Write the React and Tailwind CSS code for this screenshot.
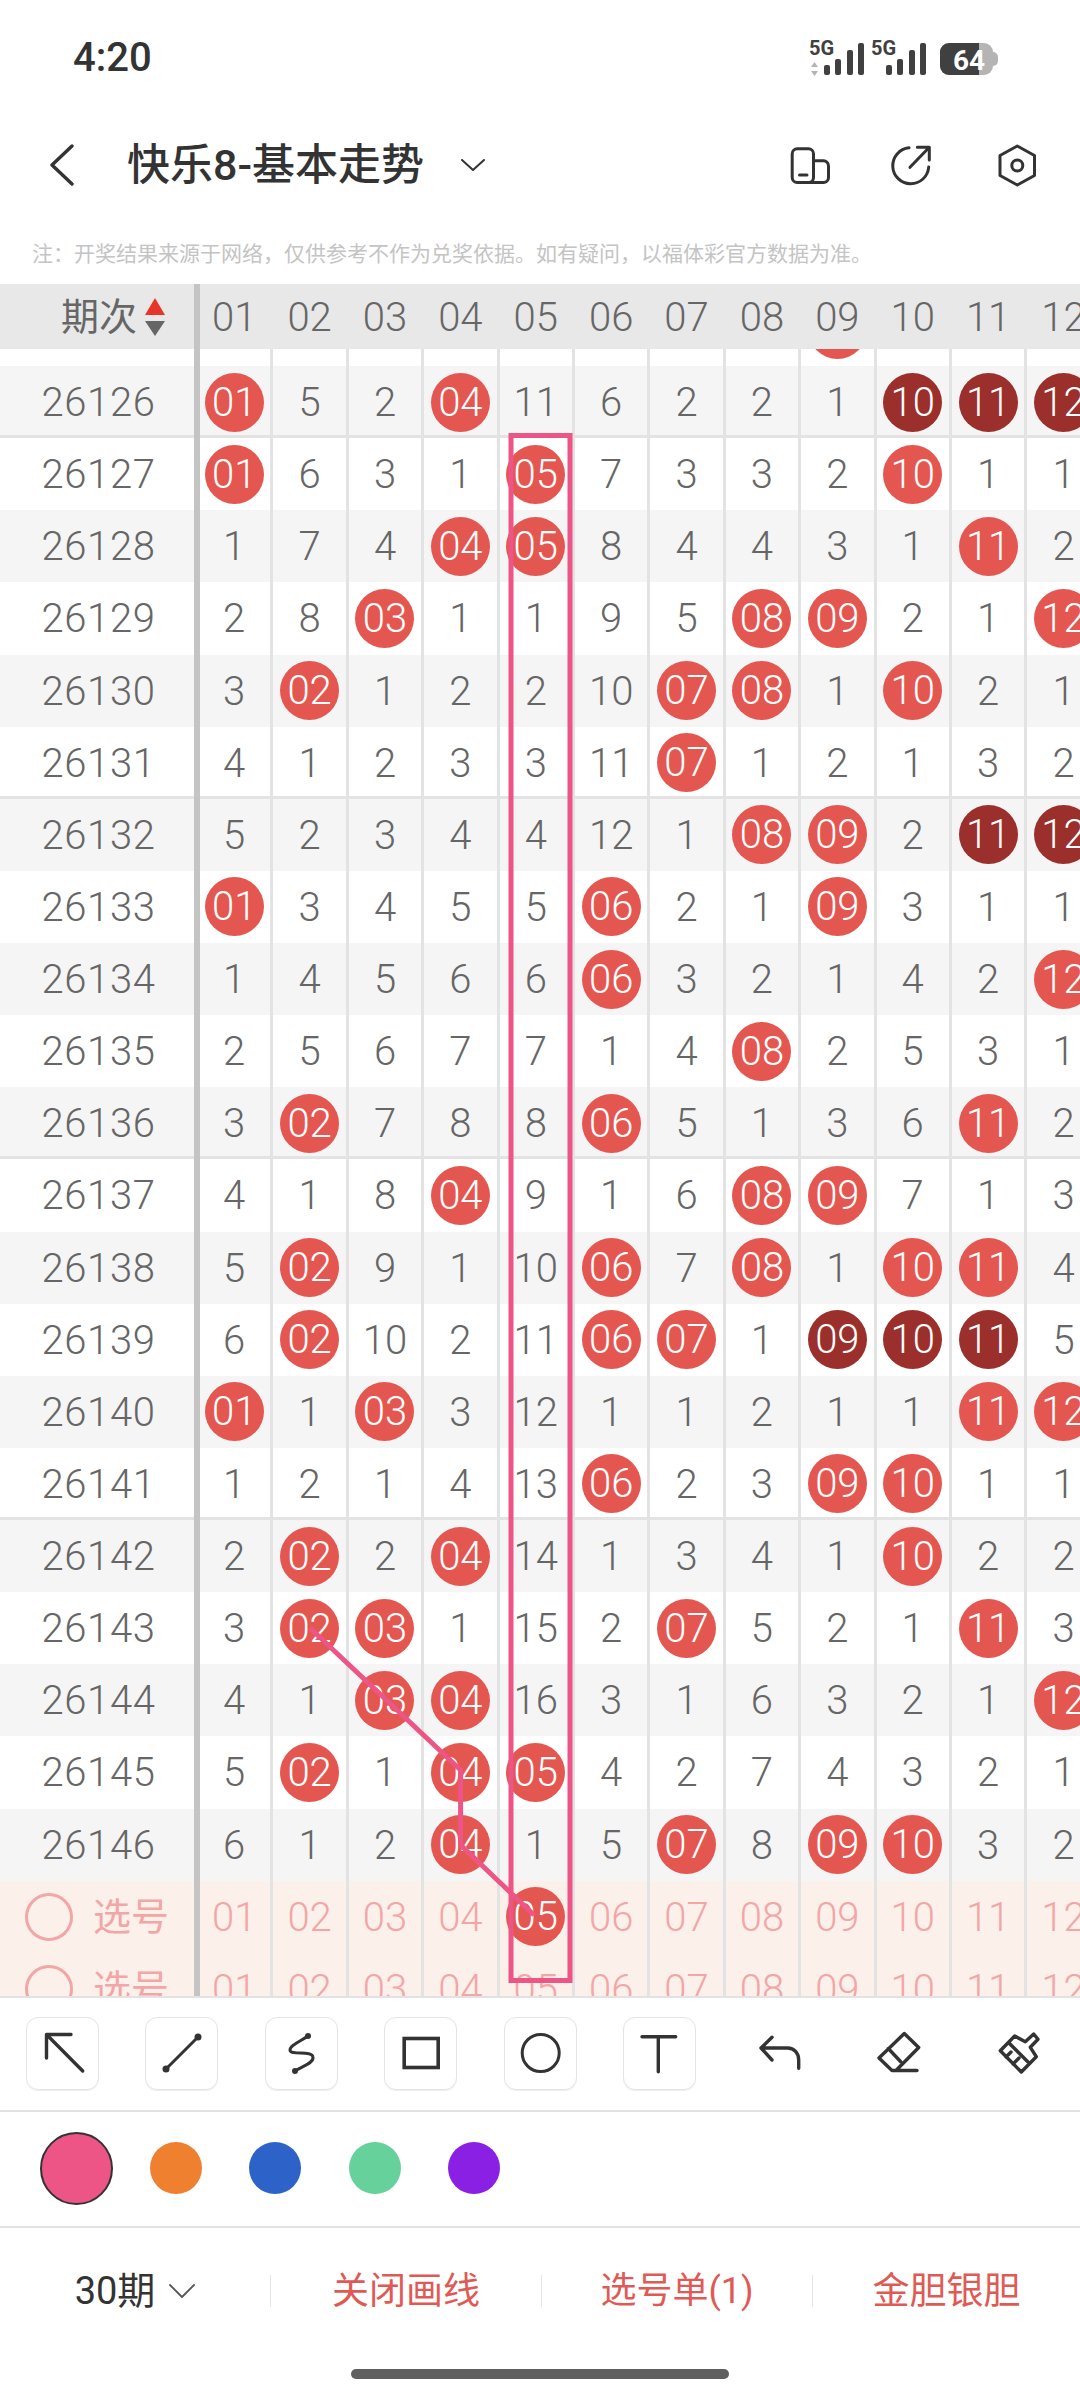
import React from 'react';

// B = red ball, D = dark ball (consecutive run), plain = omission count
const ROWS = [
  ['26125', '3 4 1 5 10 5 1 1 B09 4 2 1'],
  ['26126', 'B01 5 2 B04 11 6 2 2 1 D10 D11 D12'],
  ['26127', 'B01 6 3 1 B05 7 3 3 2 B10 1 1'],
  ['26128', '1 7 4 B04 B05 8 4 4 3 1 B11 2'],
  ['26129', '2 8 B03 1 1 9 5 B08 B09 2 1 B12'],
  ['26130', '3 B02 1 2 2 10 B07 B08 1 B10 2 1'],
  ['26131', '4 1 2 3 3 11 B07 1 2 1 3 2'],
  ['26132', '5 2 3 4 4 12 1 B08 B09 2 D11 D12'],
  ['26133', 'B01 3 4 5 5 B06 2 1 B09 3 1 1'],
  ['26134', '1 4 5 6 6 B06 3 2 1 4 2 B12'],
  ['26135', '2 5 6 7 7 1 4 B08 2 5 3 1'],
  ['26136', '3 B02 7 8 8 B06 5 1 3 6 B11 2'],
  ['26137', '4 1 8 B04 9 1 6 B08 B09 7 1 3'],
  ['26138', '5 B02 9 1 10 B06 7 B08 1 B10 B11 4'],
  ['26139', '6 B02 10 2 11 B06 B07 1 D09 D10 D11 5'],
  ['26140', 'B01 1 B03 3 12 1 1 2 1 1 B11 B12'],
  ['26141', '1 2 1 4 13 B06 2 3 B09 B10 1 1'],
  ['26142', '2 B02 2 B04 14 1 3 4 1 B10 2 2'],
  ['26143', '3 B02 B03 1 15 2 B07 5 2 1 B11 3'],
  ['26144', '4 1 B03 B04 16 3 1 6 3 2 1 B12'],
  ['26145', '5 B02 1 B04 B05 4 2 7 4 3 2 1'],
  ['26146', '6 1 2 B04 1 5 B07 8 B09 B10 3 2'],
];
const COLS = ['01', '02', '03', '04', '05', '06', '07', '08', '09', '10', '11', '12'];
const THICK = ['26126', '26131', '26136', '26141'];

function Cell({ value, first }) {
  const kind = value[0];
  const isBall = kind === 'B' || kind === 'D';
  return (
    <div className={`relative flex h-full w-[75.4px] shrink-0 items-center justify-center border-r-[3px] border-[#e3e3e3] ${first ? '-ml-[2px]' : ''}`}>
      {isBall ? (
        <div className={`flex h-[59px] w-[59px] shrink-0 items-center justify-center rounded-full pt-[1px] text-white ${kind === 'D' ? 'bg-[#9b2f2b]' : 'bg-[#e45751]'}`}>
          {value.slice(1)}
        </div>
      ) : (
        <span className="pt-[2px]">{value}</span>
      )}
    </div>
  );
}

function Row({ period, cells, index }) {
  const stripe = index % 2 === 1 ? 'bg-[#f5f5f5]' : 'bg-white';
  const line = THICK.includes(period) ? 'shadow-[inset_0_-3px_0_#e3e3e3]' : '';
  return (
    <div className={`flex h-[72.14px] items-center text-[40px] leading-none font-[350] text-[#666666] ${stripe} ${line}`}>
      <div className="relative z-10 flex h-full w-[200px] shrink-0 items-center justify-center border-r-[6px] border-[#c4c4c4] pt-[2px] pl-[3px] tracking-[0.6px]">{period}</div>
      {cells.split(' ').map((v, i) => (
        <Cell key={i} value={v} first={i === 0} />
      ))}
    </div>
  );
}

function PickRow({ ball }) {
  return (
    <div className="flex h-[72.14px] items-center bg-[#fcf0eb] text-[40px] leading-none font-[350] text-[#f2a6a6]">
      <div className="relative z-10 flex h-full w-[200px] shrink-0 items-center border-r-[6px] border-[#c4c4c4] pl-[25px]">
        <div className="h-[48px] w-[48px] rounded-full border-[3px] border-[#f2a6a6]" />
        <span className="ml-[20px] text-[38px] font-normal">选号</span>
      </div>
      {COLS.map((c, i) => (
        <Cell key={c} value={ball && c === '05' ? 'B05' : c} first={i === 0} />
      ))}
    </div>
  );
}

function StatusIcons() {
  return (
    <svg width="196" height="40" viewBox="806 36 196 40" className="shrink-0">
      <text x="809" y="53" fontSize="20" fontWeight="700" fill="#404040" fontFamily="Roboto">5G</text>
      <path d="M814.500 60l3.500 5h-7zM814.500 74l3.500-5h-7z" fill="#b4b4b4" />
      {[[824, 63], [835, 57], [847, 48], [858, 41]].map(([x, y]) => (
        <rect key={x} x={x} y={y} width="6" height={73 - y} rx="2" fill="#404040" />
      ))}
      <text x="871" y="53" fontSize="20" fontWeight="700" fill="#404040" fontFamily="Roboto">5G</text>
      {[[886, 63], [897, 57], [909, 48], [920, 41]].map(([x, y]) => (
        <rect key={x} x={x} y={y} width="6" height={73 - y} rx="2" fill="#404040" />
      ))}
      <rect x="940" y="41" width="53" height="32" rx="9" fill="#b4b4b4" />
      <path d="M949 41H979V73H949a9 9 0 0 1-9-9V50a9 9 0 0 1 9-9z" fill="#404040" />
      <path d="M993 50a5 5 0 0 1 5 5v4a5 5 0 0 1-5 5z" fill="#b4b4b4" />
      <text x="953" y="68" fontSize="28" fontWeight="700" fill="#ffffff" fontFamily="Roboto">64</text>
    </svg>
  );
}

function ToolIcon({ children, boxed }) {
  return (
    <div className={`flex h-[73px] w-[73px] shrink-0 items-center justify-center rounded-[12px] ${boxed ? 'border border-[#e4e4e4] shadow-[0_1px_0_#eeeeee]' : ''}`}>
      <svg width="72" height="73" viewBox="0 0 72 73" fill="none" stroke="#333333" strokeWidth="3.4" strokeLinecap="round" strokeLinejoin="round" className="shrink-0">
        {children}
      </svg>
    </div>
  );
}

export default function App() {
  return (
    <div className="flex h-[2400px] w-[1080px] flex-col overflow-hidden bg-white [font-family:Roboto,'Noto_Sans_CJK_SC',sans-serif]">
      {/* status bar */}
      <div className="flex h-[116px] shrink-0 items-center justify-between pr-[78px] pl-[73px]">
        <span className="text-[40px] font-medium text-[#333333]">4:20</span>
        <StatusIcons />
      </div>

      {/* nav */}
      <div className="flex h-[98px] shrink-0 items-center pr-[41px] pl-[50px]">
        <svg width="24" height="44" viewBox="0 0 24 44" fill="none" stroke="#333333" strokeWidth="3.4" strokeLinecap="round" strokeLinejoin="round">
          <path d="M22 3 2 22l20 19" />
        </svg>
        <span className="ml-[53px] text-[43px] leading-none font-medium text-[#333333]">快乐8-基本走势</span>
        <svg width="24" height="12" viewBox="0 0 24 12" fill="none" stroke="#333333" strokeWidth="2" strokeLinecap="round" strokeLinejoin="round" className="ml-[37px]">
          <path d="M1 1l11 10L23 1" />
        </svg>
        <div className="ml-auto flex">
          <svg width="44" height="44" viewBox="0 0 44 44" fill="none" stroke="#333333" strokeWidth="3" strokeLinecap="round" strokeLinejoin="round">
            <rect x="4.200" y="5.800" width="21.300" height="33.700" rx="5" />
            <path d="M27 17.800h8.500a5 5 0 0 1 5 5V34.500a5 5 0 0 1-5 5H10M11.500 32H19" />
          </svg>
          <svg width="44" height="44" viewBox="0 0 44 44" fill="none" stroke="#333333" strokeWidth="3" strokeLinecap="round" strokeLinejoin="round" className="ml-[57px]">
            <path d="M20 4.800A18 18 0 1 0 39.700 24M21 24.300 40.300 4.300M28.300 4.300H40.300V17" />
          </svg>
          <svg width="44" height="44" viewBox="0 0 44 44" fill="none" stroke="#333333" strokeWidth="3" strokeLinecap="round" strokeLinejoin="round" className="ml-[62px]">
            <path d="M22.300 3 39.500 12.500V32.500L22.300 42 5 32.500V12.500Z" />
            <circle cx="22.300" cy="22.500" r="5.500" />
          </svg>
        </div>
      </div>

      {/* note */}
      <div className="flex h-[70px] shrink-0 items-center pt-[12px] pl-[32px] text-[21px] text-[#c4c4c4]">
        注：开奖结果来源于网络，仅供参考不作为兑奖依据。如有疑问，以福体彩官方数据为准。
      </div>

      {/* trend table */}
      <div className="relative shrink-0 overflow-hidden border-b-2 border-[#e2e2e2]">
        <div className="flex h-[65px] items-center bg-[#e8e8e8] text-[40px] leading-none font-[350] text-[#666666]">
          <div className="relative z-10 flex h-full w-[200px] shrink-0 items-center border-r-[6px] border-[#c4c4c4] pl-[61px]">
            <span className="text-[38px] font-normal">期次</span>
            <svg width="20" height="38" viewBox="0 0 20 38" className="ml-[8px]">
              <path d="M10 0 20 17H0z" fill="#e8352a" />
              <path d="M0 23H20L10 38z" fill="#666666" />
            </svg>
          </div>
          {COLS.map((c, i) => (
            <div key={c} className={`flex h-full w-[75.4px] shrink-0 items-center justify-center border-r-[3px] border-transparent pt-[2px] ${i === 0 ? '-ml-[2px]' : ''}`}>
              {c}
            </div>
          ))}
        </div>
        <div className="h-[1647px] overflow-hidden">
          <div className="-mt-[55.14px]">
            {ROWS.map(([p, cells], i) => (
              <Row key={p} period={p} cells={cells} index={i} />
            ))}
            <PickRow ball />
            <PickRow />
          </div>
        </div>
        {/* hand-drawn marks sit over the table */}
        <svg width="1080" height="1714" viewBox="0 0 1080 1714" fill="none" stroke="#ec5585" strokeWidth="5" className="absolute top-0 left-0 z-20">
          <rect x="511" y="151.500" width="59" height="1545" />
          <path d="M310 1344 460.600 1486V1561L534 1631" strokeLinejoin="round" />
        </svg>
      </div>

      {/* drawing tools */}
      <div className="flex h-[114px] shrink-0 gap-[46.4px] border-b-2 border-[#e2e2e2] pt-[19px] pl-[26px]">
        <ToolIcon boxed>
          <path d="M19.500 41V17.500H44M19.500 17.500 55.700 54" />
        </ToolIcon>
        <ToolIcon boxed>
          <path d="M20 52 52 20" strokeWidth="3" />
          <circle cx="20" cy="52" r="3.500" fill="#333333" stroke="none" />
          <circle cx="52" cy="20" r="3.500" fill="#333333" stroke="none" />
        </ToolIcon>
        <ToolIcon boxed>
          <path d="M43 19C36 24 25 28 25 33C25 39 47 33 48 40C49 46 38 49 30 54" strokeWidth="3" />
          <circle cx="43" cy="19" r="3" fill="#333333" stroke="none" />
          <circle cx="30" cy="54" r="3" fill="#333333" stroke="none" />
        </ToolIcon>
        <ToolIcon boxed>
          <rect x="19.200" y="21.500" width="34" height="29" strokeLinecap="butt" strokeLinejoin="miter" strokeWidth="3.600" />
        </ToolIcon>
        <ToolIcon boxed>
          <circle cx="36.700" cy="36" r="18.500" strokeWidth="3" />
        </ToolIcon>
        <ToolIcon boxed>
          <path d="M19 19.700H52.700M35.300 19.700V54.700" />
        </ToolIcon>
        <ToolIcon>
          <path d="M29 20.300 18 31 29 43M18 31H44.700C51 31 55.700 36 55.700 43V51.300" />
        </ToolIcon>
        <ToolIcon>
          <path d="M42.300 16.500 56.700 30.500 34 53.500 30 53.500 17 41ZM26.300 31.500 38.500 44.500M30 53.500H55" />
        </ToolIcon>
        <ToolIcon>
          <path d="M18.300 33.700 32.700 19 43.300 24.700 51.700 17 56 22.300 48.300 30.300 54.300 39.700 39.300 55ZM27 26 47 46M24 40 29 35M31 47 37 41" />
        </ToolIcon>
      </div>

      {/* line colours */}
      <div className="flex h-[116px] shrink-0 items-center border-b-2 border-[#e2e2e2] pb-[2px] pl-[40px]">
        <div className="h-[73px] w-[73px] rounded-full border-2 border-[#333333] bg-[#ec5585]" />
        <div className="ml-[37px] h-[52px] w-[52px] rounded-full bg-[#ef8030]" />
        <div className="ml-[47px] h-[52px] w-[52px] rounded-full bg-[#2d63c8]" />
        <div className="ml-[48px] h-[52px] w-[52px] rounded-full bg-[#66d19b]" />
        <div className="ml-[47px] h-[52px] w-[52px] rounded-full bg-[#8a20e4]" />
      </div>

      {/* bottom actions */}
      <div className="flex h-[124px] shrink-0 items-center pt-[2px] text-[37px] leading-none text-[#e05a55]">
        <div className="flex w-[270px] items-center justify-center text-[#333333]">
          <span className="text-[38px]">30期</span>
          <svg width="26" height="14" viewBox="0 0 26 14" fill="none" stroke="#555555" strokeWidth="1.800" strokeLinecap="round" strokeLinejoin="round" className="ml-[14px]">
            <path d="M1 1l12 12L25 1" />
          </svg>
        </div>
        <div className="h-[32px] w-px bg-[#e4e4e4]" />
        <div className="w-[270px] text-center">关闭画线</div>
        <div className="h-[32px] w-px bg-[#e4e4e4]" />
        <div className="w-[270px] text-center text-[36px]">选号单(1)</div>
        <div className="h-[32px] w-px bg-[#e4e4e4]" />
        <div className="w-[267px] text-center">金胆银胆</div>
      </div>

      {/* home indicator */}
      <div className="mx-auto mt-[17px] h-[10px] w-[378px] rounded-full bg-[#5f5f5f]" />
    </div>
  );
}
